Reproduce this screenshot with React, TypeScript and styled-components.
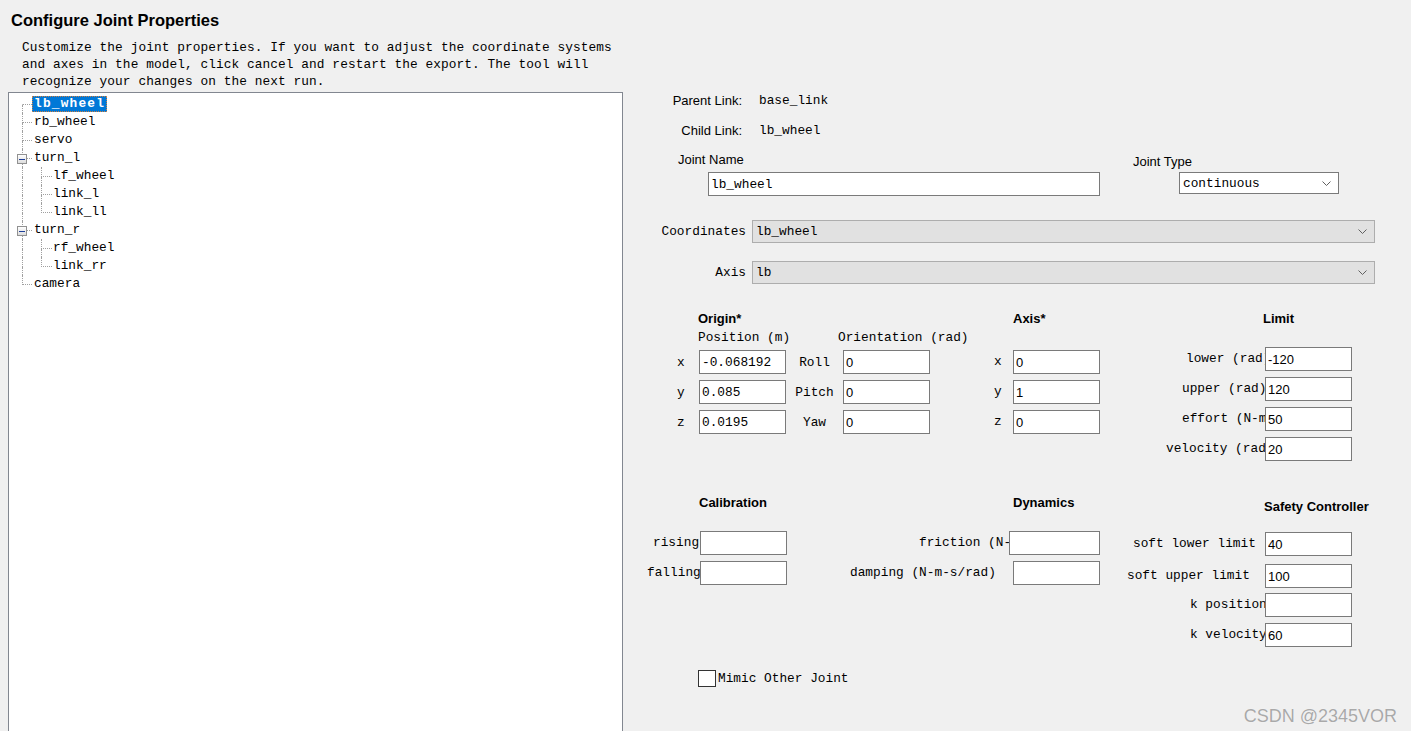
import React from 'react';
import styled, { createGlobalStyle } from 'styled-components';

const MONO = `"Liberation Mono", "DejaVu Sans Mono", monospace`;
const SANS = `"Liberation Sans", Arial, sans-serif`;
const LINE = '1px dotted #a0a0a0';

const GlobalStyle = createGlobalStyle`
  html, body {
    margin: 0;
    padding: 0;
    background: #f0f0f0;
    overflow: hidden;
  }
`;

const Window = styled.div`
  position: relative;
  width: 1411px;
  height: 731px;
  overflow: hidden;
  background: #f0f0f0;
  font-family: ${SANS};
  color: #000;
`;

const Title = styled.h1`
  margin: 0;
  padding: 11px 0 0 11px;
  font-size: 16.5px;
  line-height: 18px;
  font-weight: bold;
`;

const Intro = styled.p`
  margin: 10px 0 0 22px;
  font-family: ${MONO};
  font-size: 12.8px;
  line-height: 17px;
  letter-spacing: 0.08px;
`;

const Body = styled.div`
  display: flex;
  align-items: flex-start;
  margin-top: 2px;
`;

/* ---------- tree ---------- */

const TreePanel = styled.div`
  margin-left: 8px;
  width: 613px;
  height: 660px;
  padding-top: 2px;
  box-sizing: content-box;
  background: #fff;
  border: 1px solid #828790;
  font-family: ${MONO};
  font-size: 12.8px;
`;

const TreeRow = styled.div`
  display: flex;
  height: 18px;
`;

const GuideCell = styled.div<{ $w: number }>`
  position: relative;
  width: ${(p) => p.$w}px;
  flex-shrink: 0;
  display: flex;
  flex-direction: column;
`;

const Half = styled.div<{ $off: number; $len: number; $h: number; $left: boolean; $bottom: boolean }>`
  box-sizing: border-box;
  margin-left: ${(p) => p.$off}px;
  width: ${(p) => p.$len}px;
  height: ${(p) => p.$h}px;
  border-left: ${(p) => (p.$left ? LINE : '1px solid transparent')};
  border-bottom: ${(p) => (p.$bottom ? LINE : '0')};
`;

const Expander = styled.span`
  position: absolute;
  left: 8px;
  top: 5px;
  width: 10px;
  height: 10px;
  box-sizing: border-box;
  border: 1px solid #919191;
  background: linear-gradient(#ffffff, #dcdcdc);
  display: flex;
  align-items: center;
  justify-content: center;

  &::after {
    content: '';
    width: 6px;
    height: 1px;
    background: #1e3f99;
  }
`;

const NodeLabel = styled.span<{ $selected?: boolean }>`
  align-self: center;
  height: 16px;
  line-height: 16px;
  margin-left: -1px;
  padding: 0 2px;
  white-space: nowrap;
  ${(p) =>
    p.$selected &&
    `
    background: #0078d7;
    color: #fff;
    font-weight: bold;
    letter-spacing: 1.2px;
    outline: 1px dotted #d08040;
    outline-offset: -1px;
  `}
`;

type Guide = 'first' | 'tee' | 'end' | 'pipe';

const levels = [
  { w: 24, off: 13, len: 10 },
  { w: 19, off: 8, len: 11 },
];

const TreeGuide = ({ kind, level, expander }: { kind: Guide; level: number; expander?: boolean }) => {
  const l = levels[level];
  const topLeft = kind !== 'first';
  const topBottom = kind !== 'pipe';
  const bottomLeft = kind !== 'end';
  return (
    <GuideCell $w={l.w}>
      <Half $off={l.off} $len={l.len} $h={10} $left={topLeft} $bottom={topBottom} />
      <Half $off={l.off} $len={l.len} $h={8} $left={bottomLeft} $bottom={false} />
      {expander && <Expander />}
    </GuideCell>
  );
};

const nodes: { label: string; guides: Guide[]; selected?: boolean; expander?: boolean }[] = [
  { label: 'lb_wheel', guides: ['first'], selected: true },
  { label: 'rb_wheel', guides: ['tee'] },
  { label: 'servo', guides: ['tee'] },
  { label: 'turn_l', guides: ['tee'], expander: true },
  { label: 'lf_wheel', guides: ['pipe', 'tee'] },
  { label: 'link_l', guides: ['pipe', 'tee'] },
  { label: 'link_ll', guides: ['pipe', 'end'] },
  { label: 'turn_r', guides: ['tee'], expander: true },
  { label: 'rf_wheel', guides: ['pipe', 'tee'] },
  { label: 'link_rr', guides: ['pipe', 'end'] },
  { label: 'camera', guides: ['end'] },
];

/* ---------- form ---------- */

const Form = styled.div`
  flex: 1;
  display: flex;
  flex-direction: column;
  padding-top: 1px;
  font-size: 13px;
`;

const InfoRow = styled.div<{ $mt?: number }>`
  display: flex;
  height: 16px;
  line-height: 16px;
  margin-top: ${(p) => p.$mt ?? 0}px;
`;

const InfoLabel = styled.span`
  width: 119px;
  text-align: right;
`;

const InfoValue = styled.span`
  margin-left: 17px;
  font-family: ${MONO};
  font-size: 12.8px;
`;

const JointRow = styled.div`
  display: flex;
  align-items: flex-start;
  margin-top: 13px;
`;

const Column = styled.div<{ $ml: number; $w?: number }>`
  display: flex;
  flex-direction: column;
  align-items: flex-start;
  margin-left: ${(p) => p.$ml}px;
  ${(p) => (p.$w ? `width: ${p.$w}px;` : '')}
`;

const FieldCaption = styled.span<{ $pt?: number }>`
  line-height: 16px;
  padding-top: ${(p) => p.$pt ?? 0}px;
`;

const TextBox = styled.input<{ $w: number; $mono?: boolean; $mt?: number; $ml?: number }>`
  box-sizing: border-box;
  width: ${(p) => p.$w}px;
  height: 24px;
  margin: ${(p) => p.$mt ?? 0}px 0 0 ${(p) => p.$ml ?? 0}px;
  padding: 0 0 0 2px;
  border: 1px solid #7a7a7a;
  border-radius: 0;
  background: #fff;
  outline: none;
  color: #000;
  font-family: ${(p) => (p.$mono ? MONO : SANS)};
  font-size: ${(p) => (p.$mono ? '12.8px' : '13px')};
  flex-shrink: 0;
`;

const Dropdown = styled.div<{ $w: number; $flat?: boolean; $mt?: number; $ml?: number; $h: number }>`
  box-sizing: border-box;
  display: flex;
  align-items: center;
  justify-content: space-between;
  width: ${(p) => p.$w}px;
  height: ${(p) => p.$h}px;
  margin: ${(p) => p.$mt ?? 0}px 0 0 ${(p) => p.$ml ?? 0}px;
  padding: 0 7px 0 3px;
  background: ${(p) => (p.$flat ? '#e1e1e1' : '#fff')};
  border: 1px solid ${(p) => (p.$flat ? '#adadad' : '#7a7a7a')};
  font-family: ${MONO};
  font-size: 12.8px;
`;

const Chevron = () => (
  <svg width="9" height="5" viewBox="0 0 9 5">
    <polyline points="0.5,0.5 4.5,4.5 8.5,0.5" fill="none" stroke="#606060" strokeWidth="1" />
  </svg>
);

const SelectRow = styled.div<{ $mt: number }>`
  display: flex;
  align-items: center;
  margin-top: ${(p) => p.$mt}px;
`;

const SelectLabel = styled.span`
  width: 123px;
  text-align: right;
  font-family: ${MONO};
  font-size: 12.8px;
`;

const Section = styled.div<{ $mt: number }>`
  display: flex;
  align-items: flex-start;
  margin-top: ${(p) => p.$mt}px;
`;

const Group = styled.div<{ $w: number }>`
  width: ${(p) => p.$w}px;
  display: flex;
  flex-direction: column;
`;

const GroupTitle = styled.div<{ $ml: number; $mt?: number }>`
  margin: ${(p) => p.$mt ?? 0}px 0 0 ${(p) => p.$ml}px;
  font-weight: bold;
  line-height: 16px;
  white-space: nowrap;
`;

const SubHeads = styled.div`
  display: flex;
  margin-top: 3px;
  padding-left: 75px;
  font-family: ${MONO};
  font-size: 12.8px;
  line-height: 16px;
  white-space: nowrap;
`;

const SubHead = styled.span<{ $w?: number }>`
  flex-shrink: 0;
  ${(p) => (p.$w ? `width: ${p.$w}px;` : '')}
`;

const FieldList = styled.div<{ $mt: number }>`
  display: flex;
  flex-direction: column;
  margin-top: ${(p) => p.$mt}px;
`;

const OriginRow = styled.div<{ $mt: number }>`
  display: grid;
  grid-template-columns: 22px 87px 57px 87px;
  align-items: center;
  margin-top: ${(p) => p.$mt}px;
  padding-left: 54px;
  font-family: ${MONO};
  font-size: 12.8px;
`;

const AngleLabel = styled.span`
  text-align: center;
`;

const FieldRow = styled.div<{ $mt: number }>`
  display: flex;
  justify-content: flex-end;
  align-items: center;
  margin-top: ${(p) => p.$mt}px;
`;

const FieldLabel = styled.span<{ $w: number }>`
  width: ${(p) => p.$w}px;
  overflow: hidden;
  white-space: nowrap;
  font-family: ${MONO};
  font-size: 12.8px;
  line-height: 16px;
`;

const MimicRow = styled.label`
  display: flex;
  align-items: center;
  margin: 23px 0 0 75px;
  font-family: ${MONO};
  font-size: 12.8px;
`;

const CheckBox = styled.span`
  box-sizing: border-box;
  width: 18px;
  height: 17px;
  border: 1px solid #333;
  background: #fff;
`;

const MimicText = styled.span`
  margin-left: 2px;
`;

const Watermark = styled.div`
  position: absolute;
  right: 14px;
  bottom: 5px;
  font-size: 18px;
  line-height: 20px;
  color: #a9a9a9;
  text-shadow: 0 0 1px #fff;
`;

type Field = { label: string; lw: number; value?: string; iw?: number; mt: number };

const FieldGroup = ({ fields, mt }: { fields: Field[]; mt: number }) => (
  <FieldList $mt={mt}>
    {fields.map((f) => (
      <FieldRow key={f.label} $mt={f.mt}>
        <FieldLabel $w={f.lw}>{f.label}</FieldLabel>
        <TextBox $w={f.iw ?? 87} readOnly value={f.value ?? ''} />
      </FieldRow>
    ))}
  </FieldList>
);

const origin = [
  { axis: 'x', pos: '-0.068192', angle: 'Roll' },
  { axis: 'y', pos: '0.085', angle: 'Pitch' },
  { axis: 'z', pos: '0.0195', angle: 'Yaw' },
];

const axisFields: Field[] = [
  { label: 'x', lw: 19, value: '0', mt: 0 },
  { label: 'y', lw: 19, value: '1', mt: 6 },
  { label: 'z', lw: 19, value: '0', mt: 6 },
];

const limitFields: Field[] = [
  { label: 'lower (rad)', lw: 79, value: '-120', mt: 0 },
  { label: 'upper (rad)', lw: 83, value: '120', mt: 6 },
  { label: 'effort (N-m)', lw: 83, value: '50', mt: 6 },
  { label: 'velocity (rad/s)', lw: 99, value: '20', mt: 6 },
];

const calibrationFields: Field[] = [
  { label: 'rising', lw: 47, mt: 0 },
  { label: 'falling', lw: 53, mt: 6 },
];

const dynamicsFields: Field[] = [
  { label: 'friction (N-m)', lw: 90, iw: 91, mt: 0 },
  { label: 'damping (N-m-s/rad)', lw: 163, mt: 6 },
];

const safetyFields: Field[] = [
  { label: 'soft lower limit', lw: 132, value: '40', mt: 0 },
  { label: 'soft upper limit', lw: 138, value: '100', mt: 8 },
  { label: 'k position', lw: 75, mt: 5 },
  { label: 'k velocity', lw: 75, value: '60', mt: 6 },
];

const App = () => {
  return (
    <Window>
      <GlobalStyle />
      <Title>Configure Joint Properties</Title>
      <Intro>
        Customize the joint properties. If you want to adjust the coordinate systems
        <br />
        and axes in the model, click cancel and restart the export. The tool will
        <br />
        recognize your changes on the next run.
      </Intro>
      <Body>
        <TreePanel>
          {nodes.map((n) => (
            <TreeRow key={n.label}>
              {n.guides.map((g, i) => (
                <TreeGuide key={i} kind={g} level={i} expander={n.expander && i === 0} />
              ))}
              <NodeLabel $selected={n.selected}>{n.label}</NodeLabel>
            </TreeRow>
          ))}
        </TreePanel>

        <Form>
          <InfoRow>
            <InfoLabel>Parent Link:</InfoLabel>
            <InfoValue>base_link</InfoValue>
          </InfoRow>
          <InfoRow $mt={14}>
            <InfoLabel>Child Link:</InfoLabel>
            <InfoValue>lb_wheel</InfoValue>
          </InfoRow>

          <JointRow>
            <Column $ml={55} $w={422}>
              <FieldCaption>Joint Name</FieldCaption>
              <TextBox $w={392} $mono $mt={4} $ml={30} readOnly value="lb_wheel" />
            </Column>
            <Column $ml={33}>
              <FieldCaption $pt={2}>Joint Type</FieldCaption>
              <Dropdown $w={160} $h={22} $mt={2} $ml={46}>
                continuous
                <Chevron />
              </Dropdown>
            </Column>
          </JointRow>

          <SelectRow $mt={24}>
            <SelectLabel>Coordinates</SelectLabel>
            <Dropdown $w={623} $h={23} $ml={6} $flat>
              lb_wheel
              <Chevron />
            </Dropdown>
          </SelectRow>
          <SelectRow $mt={18}>
            <SelectLabel>Axis</SelectLabel>
            <Dropdown $w={623} $h={23} $ml={6} $flat>
              lb
              <Chevron />
            </Dropdown>
          </SelectRow>

          <Section $mt={27}>
            <Group $w={307}>
              <GroupTitle $ml={75}>Origin*</GroupTitle>
              <SubHeads>
                <SubHead $w={140}>Position (m)</SubHead>
                <SubHead>Orientation (rad)</SubHead>
              </SubHeads>
              <FieldList $mt={4}>
                {origin.map((o, i) => (
                  <OriginRow key={o.axis} $mt={i === 0 ? 0 : 6}>
                    <span>{o.axis}</span>
                    <TextBox $w={87} $mono readOnly value={o.pos} />
                    <AngleLabel>{o.angle}</AngleLabel>
                    <TextBox $w={87} readOnly value="0" />
                  </OriginRow>
                ))}
              </FieldList>
            </Group>
            <Group $w={170}>
              <GroupTitle $ml={83}>Axis*</GroupTitle>
              <FieldGroup fields={axisFields} mt={23} />
            </Group>
            <Group $w={252}>
              <GroupTitle $ml={163}>Limit</GroupTitle>
              <FieldGroup fields={limitFields} mt={20} />
            </Group>
          </Section>

          <Section $mt={34}>
            <Group $w={164}>
              <GroupTitle $ml={76}>Calibration</GroupTitle>
              <FieldGroup fields={calibrationFields} mt={20} />
            </Group>
            <Group $w={313}>
              <GroupTitle $ml={226}>Dynamics</GroupTitle>
              <FieldGroup fields={dynamicsFields} mt={20} />
            </Group>
            <Group $w={252}>
              <GroupTitle $ml={164} $mt={4}>Safety Controller</GroupTitle>
              <FieldGroup fields={safetyFields} mt={17} />
            </Group>
          </Section>

          <MimicRow>
            <CheckBox />
            <MimicText>Mimic Other Joint</MimicText>
          </MimicRow>
        </Form>
      </Body>
      <Watermark>CSDN @2345VOR</Watermark>
    </Window>
  );
};

export default App;
